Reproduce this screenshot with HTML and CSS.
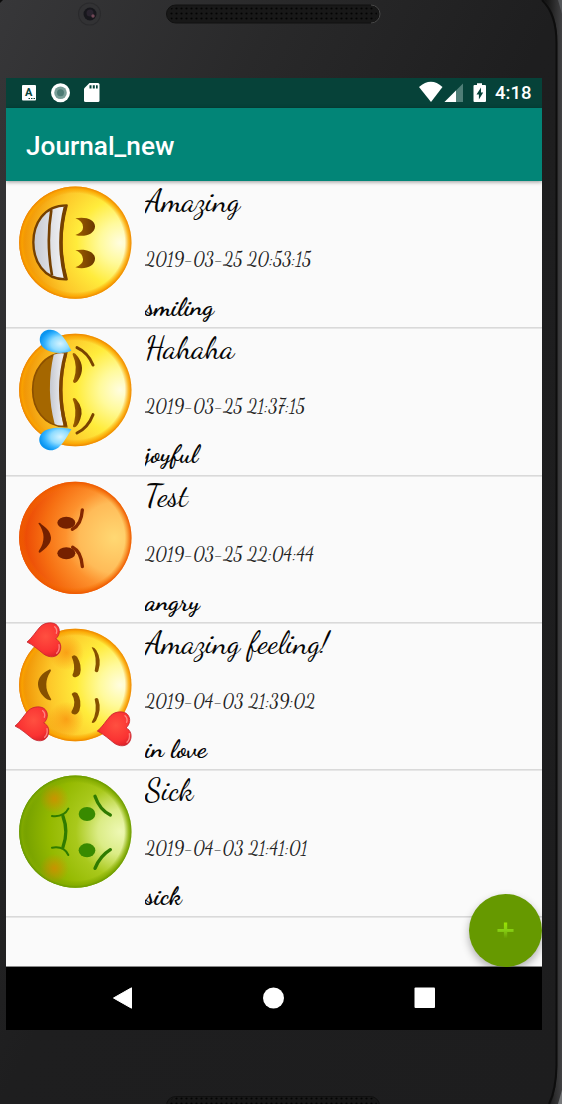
FILE: index.html
```html
<!DOCTYPE html>
<html lang="en">
<head>
<meta charset="utf-8">
<title>Journal_new</title>
<link rel="stylesheet" href="styles.css">
</head>
<body>
<div class="phone">
  <svg class="bezel" width="562" height="1104" viewBox="0 0 562 1104" aria-hidden="true">
    <defs>
      <linearGradient id="body" x1="0" y1="0" x2="1" y2="1"><stop offset="0" stop-color="#373739"/><stop offset=".25" stop-color="#29292a"/><stop offset=".5" stop-color="#1e1e1f"/><stop offset="1" stop-color="#1d1d1e"/></linearGradient>
      <linearGradient id="edge" x1="0" x2="1"><stop offset="0" stop-color="#111"/><stop offset=".35" stop-color="#202020"/><stop offset="1" stop-color="#414143"/></linearGradient>
      <pattern id="mesh" width="5" height="5" patternUnits="userSpaceOnUse" x="169" y="6"><circle cx="2.500" cy="2.500" r="1.100" fill="#030303"/></pattern>
    </defs>
    <path fill="url(#body)" d="M0 0h562v1104H0z"/>
    <path fill="#0b0b0b" d="M0 0h3L0 3z"/>
    <path fill="url(#edge)" d="M544 0Q557 12 557 42V1068Q556 1092 551 1104H562V0z"/>
    <path fill="none" stroke="#0d0d0d" stroke-width="2" d="M542 0Q556.500 14 556.500 43V1066Q556 1090 549 1104"/>
    <path fill="#55575a" d="M558 0h4v14z"/>
    <path fill="#77797b" d="M562 1090v14h-4z"/>
    <circle cx="89.500" cy="14" r="11.500" fill="#2a2a2c"/><circle cx="89.500" cy="14" r="10.500" fill="#323234"/><circle cx="90" cy="14" r="6.500" fill="#17171c"/><circle cx="90" cy="13" r="3.500" fill="#29232e"/><circle cx="93" cy="16" r="1.700" fill="#724857"/>
    <rect x="166.500" y="5" width="213" height="18" rx="9" fill="#181818" stroke="#111"/><path d="M371 5a9 9 0 0 1 0 18" fill="none" stroke="#484848"/><rect x="169" y="6" width="208" height="16" rx="8" fill="url(#mesh)"/>
    <rect x="166.500" y="1096.500" width="213" height="18" rx="9" fill="#181818" stroke="#101010"/><rect x="169" y="1097" width="208" height="16" rx="8" fill="url(#mesh)"/>
  </svg>

  <main class="screen">
    <header class="status">
      <svg width="95" height="30" viewBox="0 0 95 30">
        <rect x="16" y="7" width="14" height="15.500" rx="1" fill="#fff"/><text class="letter" x="19" y="17.500">A</text><path d="M22.500 20.500h1.500m1 0h1.500m1 0h1.500" stroke="#064239"/>
        <circle cx="54.500" cy="14.700" r="9.500" fill="#fff"/><circle cx="54.500" cy="14.700" r="6.300" fill="#799e98"/><circle cx="54.500" cy="14.700" r="3.500" fill="#4c7b74"/>
        <path fill="#fff" d="M83.500 5h8.500Q93.500 5 93.500 6.500v16q0 1.500-1.500 1.500H79.500Q78 24 78 22.500V10.500z"/><path fill="#064239" d="M83.500 7.200h2v3.300h-2zm3.300 0h2v3.300h-2zm3.200 0h1.700v3.300H90z"/>
      </svg>
      <span class="grow"></span>
      <svg width="69" height="30" viewBox="0 0 69 30"><path fill="#fff" d="M0 9Q12-1.500 23.500 9L12 24z"/><path fill="#4f7e77" d="M44 5.500V24H25.500z"/><path fill="#fff" d="M37 12.500V24H25.500z"/><path fill="#fff" d="M58 5.200h5v1.800h3q1 0 1 1V23q0 1-1 1H55.500q-1 0-1-1V8q0-1 1-1H58z"/><path fill="#064239" d="M62 9.500v5h2.200l-4.300 7v-5h-2.400z"/></svg>
      <span class="clock">4:18</span>
    </header>
    <div class="appbar"><h1>Journal_new</h1></div>
    <section class="list">
      <svg class="defs" width="0" height="0" aria-hidden="true"><defs>
        <radialGradient id="yellow" cx=".9" cy=".5" r=".9"><stop offset="0" stop-color="#fffde0"/><stop offset=".2" stop-color="#fffa9c"/><stop offset=".43" stop-color="#ffec3c"/><stop offset=".7" stop-color="#fdc82a"/><stop offset="1" stop-color="#ee8c00"/></radialGradient>
        <radialGradient id="rim"><stop offset=".88" stop-color="#f89a00" stop-opacity="0"/><stop offset=".95" stop-color="#fba600" stop-opacity=".8"/><stop offset="1" stop-color="#ee8400"/></radialGradient>
        <radialGradient id="red" cx=".85" cy=".5" r=".87"><stop offset="0" stop-color="#ffd873"/><stop offset=".36" stop-color="#ffbb58"/><stop offset=".5" stop-color="#fd922e"/><stop offset=".72" stop-color="#f66f12"/><stop offset="1" stop-color="#e83c00"/></radialGradient>
        <radialGradient id="redrim"><stop offset=".88" stop-color="#f67500" stop-opacity="0"/><stop offset="1" stop-color="#ed5600"/></radialGradient>
        <radialGradient id="green" cx=".9" cy=".5" r=".9"><stop offset="0" stop-color="#eef8b4"/><stop offset=".22" stop-color="#dbec86"/><stop offset=".44" stop-color="#a9c91c"/><stop offset=".7" stop-color="#94b900"/><stop offset="1" stop-color="#709c00"/></radialGradient>
        <radialGradient id="greenrim"><stop offset=".87" stop-color="#7fa900" stop-opacity="0"/><stop offset=".95" stop-color="#84ac00" stop-opacity=".8"/><stop offset="1" stop-color="#679800"/></radialGradient>
        <radialGradient id="blush"><stop offset="0" stop-color="#f77800" stop-opacity=".55"/><stop offset="1" stop-color="#f77800" stop-opacity="0"/></radialGradient>
        <linearGradient id="teeth" x2="1"><stop offset="0" stop-color="#c5c8d0"/><stop offset="1" stop-color="#f5f5f7"/></linearGradient>
        <linearGradient id="brown" x2="1"><stop offset="0" stop-color="#a06000"/><stop offset="1" stop-color="#693700"/></linearGradient>
        <radialGradient id="tear" cx=".65" cy=".6" r=".65"><stop offset="0" stop-color="#d4f3ff"/><stop offset=".45" stop-color="#8fdcff"/><stop offset=".75" stop-color="#35b3ff"/><stop offset="1" stop-color="#0a95f0"/></radialGradient>
        <radialGradient id="tearlow" cx=".65" cy=".4" r=".65"><stop offset="0" stop-color="#d4f3ff"/><stop offset=".45" stop-color="#8fdcff"/><stop offset=".75" stop-color="#35b3ff"/><stop offset="1" stop-color="#0a95f0"/></radialGradient>
        <radialGradient id="heartfill" cx=".55" cy=".4" r=".65"><stop offset="0" stop-color="#ff5040"/><stop offset=".7" stop-color="#fa3232"/><stop offset="1" stop-color="#da2028"/></radialGradient>
        <linearGradient id="plus" x2="0" y2="1"><stop offset="0" stop-color="#99e500"/><stop offset=".5" stop-color="#85cc12"/><stop offset="1" stop-color="#669900"/></linearGradient>
        <g id="heart"><path fill="url(#heartfill)" stroke="#c52730" stroke-width="2.500" d="M1 57C16 46 28 24 42 10C56-3 82-4 92 8C102 20 99 37 87 48C102 54 106 72 99 87C90 105 67 105 51 93C37 82 20 66 1 57Z"/><path fill="none" stroke="#ff9a93" stroke-width="4" stroke-linecap="round" d="M84 11q9 8 5 20M97 65q3 16-7 26" opacity=".8"/></g>
      </defs></svg>

      <article class="entry">
        <svg class="face" viewBox="0 3 405 441"><circle cx="208" cy="188" r="168.500" fill="url(#yellow)"/><circle cx="208" cy="188" r="168.500" fill="url(#rim)"/><path fill="url(#teeth)" stroke="#754000" stroke-width="7" stroke-linejoin="round" d="M182 76Q151 187 182 298C111 300 82 240 82 187S111 76 182 76Z"/><path fill="none" stroke="#754000" stroke-width="8" d="M136 90Q120 187 138 286"/><path fill="none" stroke="#754000" stroke-width="10" d="M178 80Q151 187 178 294"/><path fill="url(#brown)" d="M208 115C238 108 268 119 267 140S237 173 208 165Q233 155 231 140Q230 123 208 115ZM208 211C238 204 268 215 267 237S237 270 208 262Q233 251 231 237Q230 219 208 211Z"/></svg>
        <div class="copy"><div class="title">Amazing</div><div class="date">2019-03-25 20:53:15</div><div class="mood">smiling</div></div>
      </article>

      <article class="entry">
        <svg class="face" viewBox="0 10 405 441"><circle cx="208" cy="196" r="168.500" fill="url(#yellow)"/><circle cx="208" cy="196" r="168.500" fill="url(#rim)"/><path fill="#a56700" stroke="#8c5000" stroke-width="5" d="M182 84Q152 195 182 306C111 308 80 248 80 195S111 84 182 84Z"/><path fill="url(#teeth)" d="M143 90Q163 83 178 87Q148 195 172 302Q158 304 146 298Q119 195 143 90Z"/><path fill="none" stroke="#7c4300" stroke-width="10" d="M179 86Q149 195 179 304"/><path fill="url(#brown)" d="M200 90Q199 82 208 87Q239 120 222 157Q210 180 202 173Q199 170 204 162Q216 125 200 90ZM200 223Q203 217 210 223Q235 252 223 283Q212 313 202 307Q199 305 204 295Q214 255 200 223Z"/><path fill="none" stroke="#794200" stroke-width="9" stroke-linecap="round" d="M213 69Q246 84 261 121M261 270Q246 309 213 325"/><path fill="url(#tear)" d="M196 78C166 91 126 84 110 67C92 46 103 14 133 15C163 16 181 48 196 78Z"/><path fill="url(#tearlow)" d="M196 314C165 306 123 308 108 325C87 350 110 379 140 377C164 373 181 340 196 314Z"/></svg>
        <div class="copy"><div class="title">Hahaha</div><div class="date">2019-03-25 21:37:15</div><div class="mood">joyful</div></div>
      </article>

      <article class="entry">
        <svg class="face" viewBox="0 10.5 405 441"><circle cx="208" cy="196" r="168.500" fill="url(#red)"/><circle cx="208" cy="196" r="168.500" fill="url(#redrim)"/><g fill="#752000"><path d="M97 152Q100 148 106 155C123 166 134 179 135 195S122 227 103 240Q95 242 99 234Q127 194 97 152Z"/><ellipse cx="181" cy="151" rx="27" ry="18"/><ellipse cx="181" cy="242" rx="27" ry="18"/></g><path fill="none" stroke="#852700" stroke-width="10" stroke-linecap="round" d="M229 112Q226 157 199 170M200 224Q226 237 229 282"/></svg>
        <div class="copy"><div class="title">Test</div><div class="date">2019-03-25 22:04:44</div><div class="mood">angry</div></div>
      </article>

      <article class="entry">
        <svg class="face" viewBox="0 14 405 441"><circle cx="208" cy="200" r="168.500" fill="url(#yellow)"/><circle cx="208" cy="200" r="168.500" fill="url(#rim)"/><circle cx="181" cy="103" r="53" fill="url(#blush)"/><circle cx="181" cy="303" r="53" fill="url(#blush)"/><path fill="#875000" d="M132 153C108 163 95 182 96 199S111 240 132 246Q139 246 133 238Q108 199 134 159Q137 154 132 153Z"/><g fill="#865000"><path d="M197 115Q204 106 213 115Q229 140 222 167Q214 181 202 175Q197 171 202 163Q209 142 197 115ZM197 227Q204 217 214 225Q229 248 220 277Q212 293 199 286Q193 283 200 273Q211 250 197 227Z"/><path d="M257 87Q264 85 271 96Q288 124 277 158Q273 165 266 158Q276 118 257 87ZM266 242Q273 235 277 243Q288 276 270 307Q261 318 257 312Q276 281 266 242Z"/></g><use href="#heart" x="62" y="14"/><use href="#heart" x="26" y="266"/><use href="#heart" x="273" y="281"/></svg>
        <div class="copy"><div class="title">Amazing feeling!</div><div class="date">2019-04-03 21:39:02</div><div class="mood">in love</div></div>
      </article>

      <article class="entry">
        <svg class="face" viewBox="0 12 405 441"><circle cx="208" cy="197" r="168.500" fill="url(#green)"/><circle cx="208" cy="197" r="168.500" fill="url(#greenrim)"/><circle cx="145" cy="98" r="44" fill="url(#blush)"/><circle cx="145" cy="307" r="44" fill="url(#blush)"/><g fill="none" stroke="#2f7b00" stroke-linecap="round"><path stroke-width="10" d="M171 151Q188 196 171 243"/><path stroke-width="6" d="M138 150Q174 154 187 128M138 245Q174 239 187 267"/><path stroke-width="10" d="M267 91Q281 132 313 147M313 251Q282 270 267 307"/></g><ellipse cx="243" cy="144" rx="25" ry="21" fill="#388a00"/><ellipse cx="243" cy="253" rx="25" ry="21" fill="#388a00"/></svg>
        <div class="copy"><div class="title">Sick</div><div class="date">2019-04-03 21:41:01</div><div class="mood">sick</div></div>
      </article>
      <button class="fab" aria-label="Add entry"><svg width="17" height="17" viewBox="0 0 18 18"><path fill="url(#plus)" d="M7.300.5h3.500V7.500h6.700v3h-6.700v7H7.300v-7H.500v-3h6.800z"/></svg></button>
    </section>
    <nav class="nav">
      <svg width="22" height="24" viewBox="0 0 22 24"><path fill="#fff" stroke="#fff" stroke-linejoin="round" d="M1.500 12 19.500 1.800v20.400z"/></svg>
      <svg width="22" height="24" viewBox="0 0 22 24"><circle cx="10.500" cy="12" r="10.500" fill="#fff"/></svg>
      <svg width="22" height="24" viewBox="0 0 22 24"><rect x=".5" y="1.500" width="20.500" height="20.500" rx="1" fill="#fff"/></svg>
    </nav>
  </main>
</div>
</body>
</html>
```

FILE: styles.css
```css
* { box-sizing: border-box; }
body { margin: 0; background: #1e1e1f; font-family: Roboto, sans-serif; overflow: hidden; }
svg { display: block; flex: none; }
.phone { position: relative; width: 562px; height: 1104px; padding: 78px 20px 74px 6px; overflow: hidden; }
.bezel { position: absolute; inset: 0; }
.screen { position: relative; width: 536px; height: 952px; display: flex; flex-direction: column; background: #fafafa; overflow: hidden; }
.status { height: 30px; flex: none; display: flex; align-items: center; background: #064239; color: #fff; }
.letter { font: 700 11px Roboto, sans-serif; fill: #064239; }
.grow { flex: 1; }
.clock { width: 54px; padding-left: 7px; font-size: 18.5px; font-weight: 500; line-height: 30px; }
.appbar { position: relative; z-index: 1; height: 73px; flex: none; padding-left: 20px; display: flex; align-items: center; background: #028577; box-shadow: 0 1px 4px rgba(0,0,0,.4); }
h1 { margin: 2px 0 0; color: #fff; font-size: 26.2px; font-weight: 500; line-height: 32px; }
.list { position: relative; height: 786px; flex: none; border-bottom: 1px solid #888; }
.defs { position: absolute; }
.entry { display: flex; height: 147.25px; box-shadow: 0 1px #e6e6e6; border-bottom: 1px solid #d9d9d9; }
.face { width: 135px; height: 147px; margin-right: 4px; overflow: visible; }
.copy { width: 260px; display: flex; flex-direction: column; overflow: hidden; font-family: "Dancing Script", "Liberation Serif", cursive; color: #050505; white-space: nowrap; }
.title { height: 54px; font-size: 31.3px; line-height: 40px; }
.date { height: 44px; font-size: 20.9px; line-height: 48px; color: #222; transform: scaleX(.885); transform-origin: left; }
.mood { height: 47px; font-size: 26.3px; line-height: 55px; font-weight: 700; }
.fab { position: absolute; right: 0; bottom: -.5px; width: 73px; height: 73px; padding: 0; border: 0; border-radius: 50%; display: grid; place-items: center; background: #669900; box-shadow: 0 4px 8px rgba(0,0,0,.3); }
.nav { position: relative; height: 63px; flex: none; display: flex; align-items: center; gap: 129px; padding: 0 0 1px 106px; background: #000; }
```
